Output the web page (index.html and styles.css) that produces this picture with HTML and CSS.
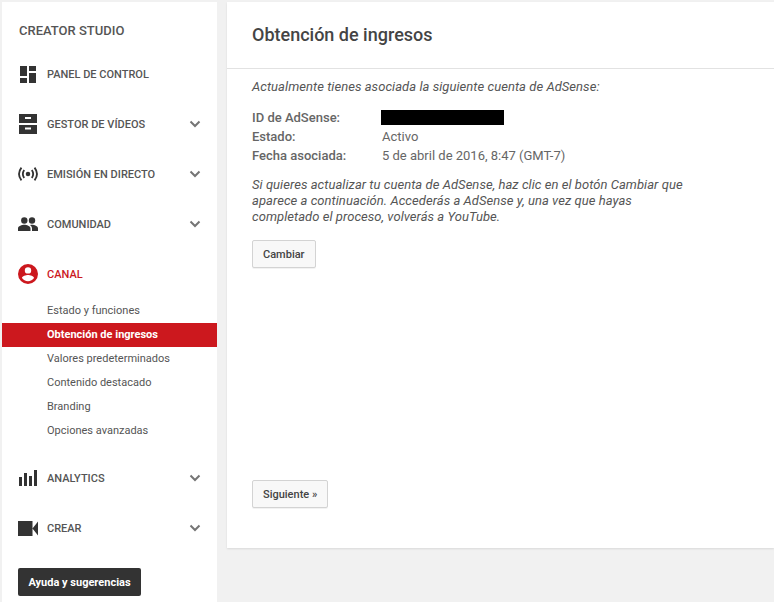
FILE: index.html
```html
<!DOCTYPE html>
<html lang="es">
<head>
<meta charset="utf-8">
<title>Obtención de ingresos</title>
<link rel="stylesheet" href="styles.css">
</head>
<body>
<div class="page">
  <nav class="sidebar">
    <div class="brand">CREATOR STUDIO</div>
    <div class="row">
      <span class="ico"><svg width="16" height="17" viewBox="0 0 16 17"><path fill="#333" d="M0 0h7v10H0zM9 0h7v5H9zM9 7h7v10H9zM0 12h7v5H0z"/></svg></span>
      <span class="label">PANEL DE CONTROL</span>
    </div>
    <div class="row">
      <span class="ico"><svg width="18" height="20" viewBox="0 0 18 20"><path fill="#333" fill-rule="evenodd" d="M0 0h18v9H0zM6 3v2h6V3zM0 11h18v9H0zM6 13.500v2h6v-2z"/></svg></span>
      <span class="label">GESTOR DE VÍDEOS</span>
      <svg class="chev" width="12" height="8" viewBox="0 0 12 8"><path fill="none" stroke="#757575" stroke-width="2" d="M1.500 1.500L6 6l4.500-4.500"/></svg>
    </div>
    <div class="row">
      <span class="ico"><svg width="22" height="16" viewBox="0 0 22 16"><circle cx="11" cy="8" r="2.500" fill="#333"/><path fill="none" stroke="#333" stroke-width="2" d="M6.800 3.500Q3.800 8 6.800 12.500M15.200 3.500Q18.200 8 15.200 12.500M3.800 1Q-1.600 8 3.800 15M18.200 1Q23.600 8 18.200 15"/></svg></span>
      <span class="label">EMISIÓN EN DIRECTO</span>
      <svg class="chev" width="12" height="8" viewBox="0 0 12 8"><path fill="none" stroke="#757575" stroke-width="2" d="M1.500 1.500L6 6l4.500-4.500"/></svg>
    </div>
    <div class="row">
      <span class="ico"><svg width="20" height="14" viewBox="0 0 20 14"><g fill="#333"><circle cx="6.300" cy="3.500" r="3.200"/><circle cx="14" cy="3.500" r="3.200"/><path d="M0 14v-2.500C0 9 4 7.800 6.300 7.800s6.200 1.200 6.200 3.700V14zM14 14v-2.500c0-1.500-.8-2.700-2-3.500.7-.2 1.400-.2 2-.2 2.300 0 6 1.200 6 3.700V14z"/></g></svg></span>
      <span class="label">COMUNIDAD</span>
      <svg class="chev" width="12" height="8" viewBox="0 0 12 8"><path fill="none" stroke="#757575" stroke-width="2" d="M1.500 1.500L6 6l4.500-4.500"/></svg>
    </div>
    <div class="row active">
      <span class="ico"><svg width="20" height="20" viewBox="0 0 20 20"><path fill="#cc181e" fill-rule="evenodd" d="M10 0a10 10 0 1 0 0 20 10 10 0 0 0 0-20zm0 3.200a3.200 3.200 0 1 1 0 6.400 3.200 3.200 0 0 1 0-6.400zm0 14c-2.500 0-4.800-1.200-6-3.200 0-2 4-3 6-3s6 1 6 3c-1.200 2-3.500 3.200-6 3.200z"/></svg></span>
      <span class="label">CANAL</span>
    </div>
    <ul class="submenu">
      <li class="sub">Estado y funciones</li>
      <li class="sub current">Obtención de ingresos</li>
      <li class="sub">Valores predeterminados</li>
      <li class="sub">Contenido destacado</li>
      <li class="sub">Branding</li>
      <li class="sub">Opciones avanzadas</li>
    </ul>
    <div class="row">
      <span class="ico"><svg width="18" height="16" viewBox="0 0 18 16"><path fill="#333" d="M0 7h3v9H0zM5 3h3v13H5zM10 6h3v10h-3zM15 0h3v16h-3z"/></svg></span>
      <span class="label">ANALYTICS</span>
      <svg class="chev" width="12" height="8" viewBox="0 0 12 8"><path fill="none" stroke="#757575" stroke-width="2" d="M1.500 1.500L6 6l4.500-4.500"/></svg>
    </div>
    <div class="row">
      <span class="ico"><svg width="20" height="15" viewBox="0 0 20 15"><path fill="#333" d="M0 0h14.500v15H0zM14.500 7.500L20 .5v14z"/></svg></span>
      <span class="label">CREAR</span>
      <svg class="chev" width="12" height="8" viewBox="0 0 12 8"><path fill="none" stroke="#757575" stroke-width="2" d="M1.500 1.500L6 6l4.500-4.500"/></svg>
    </div>
    <button class="help">Ayuda y sugerencias</button>
  </nav>
  <main class="main">
    <h1 class="title">Obtención de ingresos</h1>
    <div class="content">
      <p class="note">Actualmente tienes asociada la siguiente cuenta de AdSense:</p>
      <dl class="info">
        <dt class="key">ID de AdSense:</dt><dd class="val"><span class="redact"></span></dd>
        <dt class="key">Estado:</dt><dd class="val">Activo</dd>
        <dt class="key">Fecha asociada:</dt><dd class="val">5 de abril de 2016, 8:47 (GMT-7)</dd>
      </dl>
      <p class="note para">Si quieres actualizar tu cuenta de AdSense, haz clic en el botón Cambiar que aparece a continuación. Accederás a AdSense y, una vez que hayas completado el proceso, volverás a YouTube.</p>
      <button class="btn">Cambiar</button>
      <div class="spacer"></div>
      <button class="btn">Siguiente »</button>
    </div>
  </main>
</div>
</body>
</html>
```
FILE: styles.css
```css
* { box-sizing: border-box; }
html, body { margin: 0; height: 100%; }
body {
  background: #f1f1f1;
  font-family: Roboto, "Liberation Sans", sans-serif;
  color: #333;
  overflow: hidden;
}
.page {
  display: flex;
  align-items: flex-start;
  gap: 10px;
  padding: 2px 0 0 2px;
  height: 602px;
}
.sidebar {
  width: 215px;
  height: 600px;
  flex: none;
  background: #fff;
  display: flex;
  flex-direction: column;
}
.brand {
  height: 47px;
  padding: 21px 0 0 17px;
  font-size: 13px;
  line-height: 16px;
  font-weight: 500;
  color: #555;
}
.row {
  height: 50px;
  display: flex;
  align-items: center;
  padding-left: 16px;
  position: relative;
}
.ico {
  width: 20px;
  flex: none;
  display: flex;
  justify-content: center;
  align-items: center;
}
.label {
  margin-left: 9px;
  font-size: 11px;
  font-weight: 500;
  color: #555;
  flex: 1;
}
.chev { flex: none; margin-right: 16px; }
.active .label { color: #cc181e; }
.submenu { list-style: none; margin: 0 0 10px; padding: 0; }
.sub {
  height: 24px;
  line-height: 24px;
  padding-left: 45px;
  font-size: 11px;
  color: #555;
}
.current {
  background: #cc181e;
  color: #fff;
  font-weight: 700;
}
.help {
  margin: 15px 0 0 16px;
  width: 123px;
  height: 28px;
  padding: 0;
  border: 0;
  border-radius: 2px;
  background: #333;
  color: #fff;
  font: 700 11px Roboto, sans-serif;
}
.main {
  flex: 1;
  height: 546px;
  background: #fff;
  box-shadow: 0 1px 2px rgba(0, 0, 0, .1);
}
.title {
  margin: 0;
  height: 67px;
  padding: 22px 0 0 25px;
  border-bottom: 1px solid #e2e2e2;
  font-size: 18px;
  line-height: 22px;
  font-weight: 500;
  color: #444;
}
.content {
  padding: 10px 0 0 25px;
  display: flex;
  flex-direction: column;
  align-items: flex-start;
}
.note {
  margin: 0;
  font-size: 13px;
  line-height: 16px;
  font-style: italic;
  letter-spacing: .05px;
  color: #555;
}
.para { width: 440px; margin-top: 12px; }
.info {
  margin: 13px 0 0;
  display: grid;
  grid-template-columns: 130px auto;
  grid-auto-rows: 19px;
  font-size: 13px;
  line-height: 19px;
}
.key { font-weight: 500; color: #666; }
.val { margin: 0; color: #666; display: flex; align-items: center; }
.redact { display: block; width: 123px; height: 15px; margin-left: -1px; background: #000; }
.btn {
  height: 28px;
  padding: 0 10px;
  border: 1px solid #d3d3d3;
  border-radius: 2px;
  background: #f8f8f8;
  box-shadow: 0 1px 0 rgba(0, 0, 0, .05);
  color: #444;
  font: 500 11px Roboto, sans-serif;
}
.para + .btn { margin-top: 15px; }
.spacer { height: 212px; }
```
